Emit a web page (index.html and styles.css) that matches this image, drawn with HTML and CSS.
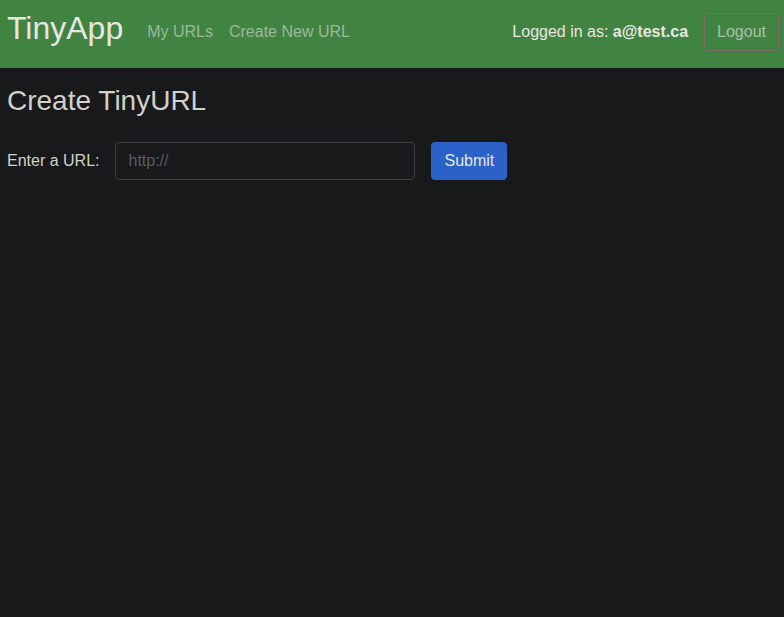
FILE: index.html
```html
<!DOCTYPE html>
<html lang="en">
<head>
<meta charset="utf-8">
<title>TinyApp</title>
<link rel="stylesheet" href="styles.css">
</head>
<body>
<nav class="navbar">
  <a class="brand" href="#">TinyApp</a>
  <div class="nav-links">
    <a class="nav-link" href="#">My URLs</a>
    <a class="nav-link" href="#">Create New URL</a>
  </div>
  <div class="nav-right">
    <span class="user">Logged in as: <b>a@test.ca</b></span>
    <button class="btn btn-logout" type="button">Logout</button>
  </div>
</nav>
<main class="main">
  <h1 class="title">Create TinyURL</h1>
  <form class="url-form">
    <label class="label" for="url">Enter a URL:</label>
    <input class="input" id="url" type="text" placeholder="http://">
    <button class="btn btn-primary" type="button">Submit</button>
  </form>
</main>
</body>
</html>
```
FILE: styles.css
```css
* { box-sizing: border-box; }
html, body { margin: 0; padding: 0; }
body {
  background: #18191b;
  color: #d3cfc9;
  font-family: "Liberation Sans", Arial, sans-serif;
  font-size: 16px;
  line-height: 1.5;
  height: 617px;
}
.navbar {
  display: flex;
  align-items: center;
  height: 68px;
  padding: 0 5px 4px 7px;
  background: #418442;
}
.brand {
  font-size: 32px;
  line-height: 48px;
  color: #e8e6e3;
  text-decoration: none;
  margin-right: 16px;
  margin-bottom: 8px;
}
.nav-links { display: flex; }
.nav-link {
  color: #9bb99b;
  text-decoration: none;
  padding: 0 8px;
}
.nav-right {
  margin-left: auto;
  display: flex;
  align-items: center;
  gap: 16px;
}
.user { color: #e8e6e3; }
.user b { font-weight: bold; }
.btn {
  font-family: inherit;
  font-size: 16px;
  line-height: 24px;
  padding: 6px 12px;
  border-radius: 4px;
  border: 1px solid transparent;
  cursor: pointer;
}
.btn-logout {
  background: transparent;
  color: #a9c0a9;
  border-color: #7d6d6e;
}
.main { padding: 16px 7px; }
.title {
  margin: 0 0 24px;
  font-size: 28px;
  font-weight: 400;
  line-height: 1.2;
  color: #d3cfc9;
}
.url-form {
  display: flex;
  align-items: center;
  gap: 16px;
}
.label { color: #d3cfc9; }
.input {
  width: 300px;
  height: 38px;
  padding: 6px 12px;
  font-family: inherit;
  font-size: 16px;
  color: #d3cfc9;
  background: #181a1b;
  border: 1px solid #3c4043;
  border-radius: 4px;
  outline: none;
}
.input::placeholder { color: #5b5f62; }
.btn-primary {
  height: 38px;
  background: #2a62c7;
  color: #e8e6e3;
  border-color: #2a62c7;
}
```
